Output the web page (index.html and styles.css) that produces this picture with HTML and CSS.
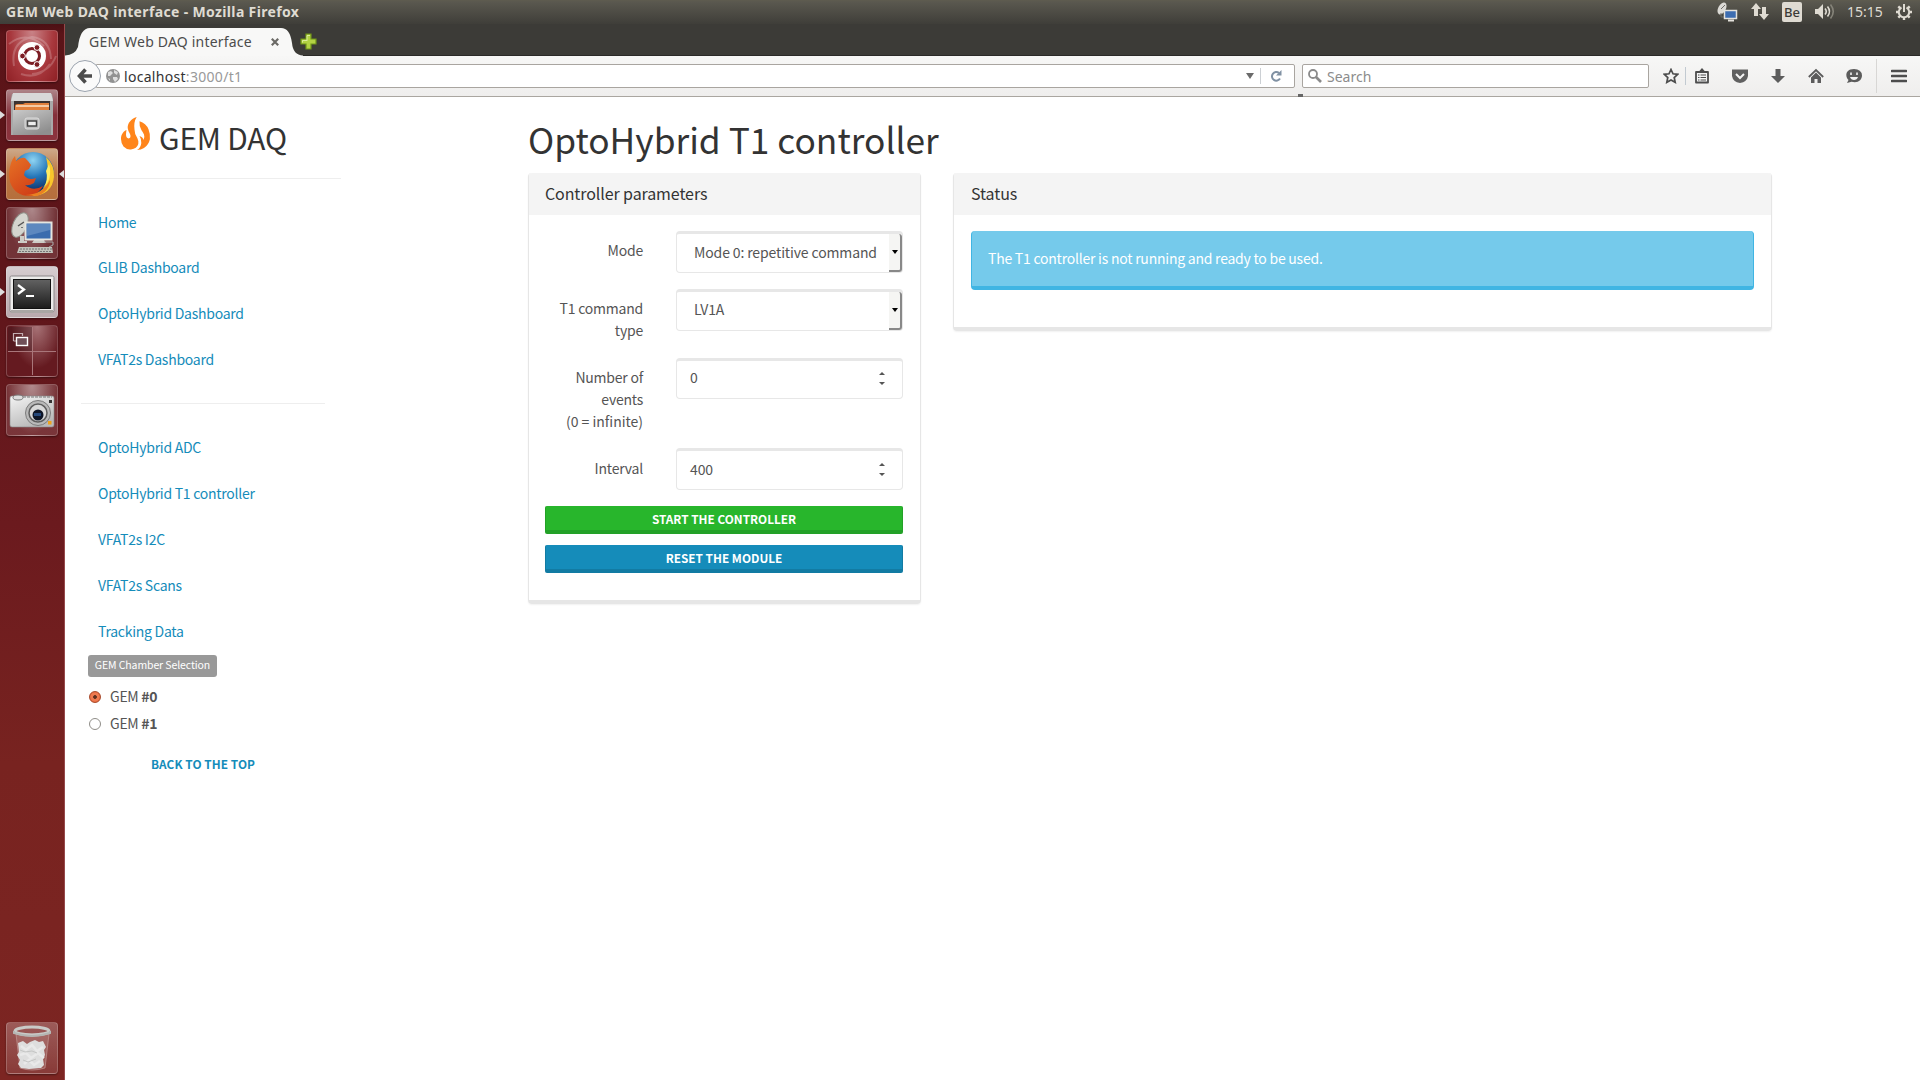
FILE: index.html
```html
<!DOCTYPE html>
<html lang="en">
<head>
<meta charset="utf-8">
<title>GEM Web DAQ interface</title>
<link rel="stylesheet" href="styles.css">
</head>
<body>
<header class="menubar">
  <span class="menubar-title">GEM Web DAQ interface - Mozilla Firefox</span>
  <div class="tray">
    <svg class="tray-net" width="22" height="20" viewBox="0 0 22 20"><ellipse cx="6" cy="6.500" rx="3.800" ry="6.500" transform="rotate(28 6 6.500)" fill="#dcdad5"/><path d="M5 7l4-4M5 11v4h4" stroke="#6d6c67" fill="none"/><rect x="8.500" y="8.500" width="12" height="8" fill="#3d6db1" stroke="#e4e2dd" stroke-width="1.500"/><path d="M12 18.500h6" stroke="#e4e2dd" stroke-width="2"/></svg>
    <svg class="tray-arrows" width="18" height="18" viewBox="0 0 18 18" fill="#dfdbd2"><path d="M5 0l5 6H7v7H3V6H0zM13 17l-5-6h3V4h4v7h3z"/></svg>
    <span class="tray-lang">Be</span>
    <svg class="tray-vol" width="20" height="18" viewBox="0 0 20 18"><path d="M0 6h3l5-5v15l-5-5H0z" fill="#dfdbd2"/><g fill="none" stroke-width="1.600"><path d="M10 5.500q2.500 3 0 6" stroke="#dfdbd2"/><path d="M12.500 3.500q4 5 0 10" stroke="#dfdbd2"/><path d="M15.500 1.500q5.500 7 0 14" stroke="#858379"/></g></svg>
    <span class="tray-time">15:15</span>
    <svg class="tray-gear" width="18" height="18" viewBox="0 0 18 18" fill="none" stroke="#dfdbd2"><path d="M6.500 4.500a5.200 5.200 0 1 0 5 0" stroke-width="2"/><path d="M9 1v8" stroke-width="2"/><path d="M1 9h2.500M14.500 9H17M3.300 3.300l2 2M14.700 3.300l-2 2M3.300 14.700l2-2M14.700 14.700l-2-2M9 14.500V17" stroke-width="2.400"/></svg>
  </div>
</header>
<div class="desktop">
  <nav class="launcher">
    <div class="tile tile-dash"><svg viewBox="0 0 52 52"><g fill="none" stroke="#fff" stroke-opacity=".2" stroke-width="2"><path d="M8 36Q4 12 26 7q18 2 19 22M3 14Q20 0 38 16M15 44q18 6 29-10M26 44q18-2 24-18"/></g><circle cx="26" cy="26" r="14" fill="#fff"/><circle cx="26" cy="26" r="7.500" fill="none" stroke="#7c1d24" stroke-width="3"/><g fill="#7c1d24" stroke="#fff" stroke-width="1"><circle cx="16.500" cy="26" r="2.900"/><circle cx="31" cy="17.500" r="2.900"/><circle cx="31" cy="34.500" r="2.900"/></g></svg></div>
    <div class="tile tile-files running"><svg viewBox="0 0 52 52"><defs><linearGradient id="fg" x2=".6" y2="1"><stop stop-color="#c9c9c9"/><stop offset="1" stop-color="#8f8f8f"/></linearGradient></defs><path d="M6 5h40l1 5v36H5V10z" fill="#a9a9a9"/><path d="M7 4h38l2 8H5z" fill="#d8d8d8"/><path d="M8 12h36v10H8z" fill="#3b3230"/><path d="M9 17q0-2 3-2l5 0 2-1h24v8H9z" fill="#e2803c"/><path d="M10 17h33" stroke="#fbe3c8" stroke-width="1.500"/><path d="M7 21h38v25H7z" fill="url(#fg)"/><rect x="19" y="29" width="14" height="11" rx="2" fill="#bdbdbd" stroke="#ddd"/><rect x="21.500" y="32" width="9" height="5" fill="#ededed" stroke="#444" stroke-width="1.500"/></svg></div>
    <div class="tile tile-firefox running active"><svg viewBox="0 0 52 52"><defs><radialGradient id="gl" cx=".5" cy=".2" r=".8"><stop stop-color="#8fd4f2"/><stop offset=".5" stop-color="#2375b8"/><stop offset="1" stop-color="#0e2458"/></radialGradient><linearGradient id="fx" x2=".7" y2="1"><stop stop-color="#e77325"/><stop offset="1" stop-color="#cf3c17"/></linearGradient></defs><circle cx="27" cy="25" r="21" fill="url(#gl)"/><path d="M40 9q9 8 8 20-2 18-22 19 15-5 15-19 2-8-1-20z" fill="#f9c62b"/><path d="M43 16q4 15-6 24 6-8 3-17z" fill="#fdec62"/><path d="M5 15q1-4 4-7l1 5q5-4 9-3l3 3 3 4-2 4-4 2-1 4q4 6 12 3l-2 5q-5 3-9 2 8 7 18 1-4 7-11 10Q9 49 4 34q-2-10 1-19z" fill="url(#fx)"/><path d="M19 47q17 0 25-15 0 11-13 16z" fill="#e98021"/></svg></div>
    <div class="tile"><svg viewBox="0 0 52 52"><ellipse cx="14" cy="18" rx="7" ry="13" transform="rotate(24 14 18)" fill="#d5d5cf" stroke="#8e9089"/><path d="M12 19l6-4M16 20v1" stroke="#555" stroke-width="1.500"/><path d="M14 29h4v5h3v2H12v-2h2zM28 33h10l2 3H26z" fill="#cdcdc7"/><rect x="19.500" y="15.500" width="26" height="17" fill="#3a6cae" stroke="#e5e5e0" stroke-width="2"/><path d="M21 17h23v6L21 29z" fill="#7fa3d0" opacity=".5"/><path d="M38 35h9v3l-4 2" fill="none" stroke="#aaa"/><path d="M13 40h33l1 6H11z" fill="#c2c3bb"/><path d="M14 42h32M13 44.500h33" stroke="#777" stroke-dasharray="2 1"/></svg></div>
    <div class="tile tile-term running"><svg viewBox="0 0 52 52"><defs><linearGradient id="tg" y2="1" x2="0"><stop stop-color="#626262"/><stop offset="1" stop-color="#1c1c1c"/></linearGradient></defs><rect x="4" y="10" width="44" height="36" rx="1.500" fill="#ecebea" stroke="#8b8789"/><rect x="5" y="44" width="42" height="3" fill="#a9a6a4"/><rect x="7.500" y="13.500" width="37" height="29" fill="url(#tg)" stroke="#111"/><path d="M12 19l6 4.500-6 4.500" fill="none" stroke="#fff" stroke-width="2.300"/><path d="M20 30h8" stroke="#fff" stroke-width="2"/></svg></div>
    <div class="tile tile-work"><svg viewBox="0 0 52 52"><path d="M26.500 2v48M2 26.500h48" stroke="#a9767a"/><path d="M2 2h24v24H2z" fill="#3a1a20" opacity=".35"/><path d="M7.500 16V8.500h9V11M7.500 16H10" fill="none" stroke="#c3aeb1" stroke-width="1.200"/><rect x="10.500" y="12.500" width="11" height="8" fill="#705058" stroke="#fff" stroke-width="1.400"/></svg></div>
    <div class="tile"><svg viewBox="0 0 52 52"><defs><linearGradient id="cg" x2=".5" y2="1"><stop stop-color="#f4f4f4"/><stop offset="1" stop-color="#b9b9b9"/></linearGradient></defs><rect x="4" y="12" width="44" height="31" rx="2" fill="url(#cg)" stroke="#888" stroke-width=".6"/><ellipse cx="12" cy="13.500" rx="5" ry="2.500" fill="#ddd" stroke="#777"/><path d="M17 13h29" stroke="#777" stroke-dasharray="3 1"/><circle cx="32" cy="29" r="12.500" fill="#b9b9b9" stroke="#7c7c7c"/><circle cx="32" cy="29" r="9" fill="#d9d9d9" stroke="#5e5e5e" stroke-width="1.500"/><circle cx="32" cy="31" r="5.500" fill="#0d1526"/><rect x="28" y="29" width="7" height="3" fill="#24477a"/><rect x="43" y="16" width="3" height="3" fill="#333"/><rect x="42" y="37" width="3.500" height="3.500" fill="#f0a31a"/></svg></div>
    <div class="tile tile-trash"><svg viewBox="0 0 52 52"><path d="M10 12h33l-4 34q-13 4-25 0z" fill="#d7b5b3" fill-opacity=".22" stroke="#c8a19f" stroke-opacity=".6"/><path d="M12 21l5-2 4 3 3-2 5-2 4 2 4-1 3 6-2 3 1 5-2 4 1 6-3 3-12 1-8-1-3-4 2-4-3-5 2-3z" fill="#dedede"/><path d="M15 24l5 4 6-5 5 6 6-4M14 33l6-2 5 5 7-5 6 5M18 42l5-4 5 5 6-4" fill="none" stroke="#e9e9e9" stroke-width="2.500"/><path d="M14 28l5 2 7-1 5 2M17 38l5 2 8-3" fill="none" stroke="#c4c5c4"/><ellipse cx="26" cy="9" rx="17" ry="4" fill="none" stroke="#c9cac7" stroke-width="3"/><path d="M8 9v2q18 6 36 0V9" fill="none" stroke="#b5b6b3" stroke-width="2"/></svg></div>
  </nav>
  <main class="browser">
    <div class="tabstrip">
      <div class="tab">
        <svg class="tab-shape" width="240" height="33" viewBox="0 0 240 33"><path d="M0 33V31.500Q10 31 13 23Q15 4 25 4H216Q225 4 227 19Q228 31 238 31.500V33z" fill="#f8f8f7"/></svg>
        <span class="tab-title">GEM Web DAQ interface</span>
        <svg class="tab-close" width="8" height="8" viewBox="0 0 8 8"><path d="M.8.8l6.400 6.400M7.200.8L.8 7.200" stroke="#6b6a66" stroke-width="2.200"/></svg>
      </div>
      <svg class="tab-new" width="17" height="17" viewBox="0 0 17 17"><path d="M6 1h5v5h5v5h-5v5H6v-5H1V6h5z" fill="#b3d243" stroke="#6f9418" stroke-width="1.200"/><path d="M7 8V2.500h3M2.500 9.500V7.500H7" fill="none" stroke="#dcec9c"/></svg>
    </div>
    <div class="toolbar">
      <div class="back"><svg width="16" height="16" viewBox="0 0 16 16"><path d="M8.500 1.500L2.500 8l6 6.500M3 8h12" fill="none" stroke="#4c4c4c" stroke-width="3.600"/></svg></div>
      <div class="urlbar">
        <svg class="globe" width="14" height="14" viewBox="0 0 14 14"><circle cx="7" cy="7" r="7" fill="#929292"/><path d="M2 3l3-1 2 2-3 3H2zM8 1l4 2-1 3-3-2zM7 8l4 0 1 2-3 3-2-3zM2 9l2 1 0 2z" fill="#dedede"/></svg>
        <span class="url"><b>localhost</b>:3000/t1</span>
        <svg class="drop" width="8" height="6" viewBox="0 0 8 6"><path d="M0 0h8L4 6z" fill="#6b6b6b"/></svg>
        <i class="url-sep"></i>
        <svg class="reload" width="12" height="12" viewBox="0 0 12 12"><path d="M9 3a4.300 4.300 0 1 0 1 5.500" fill="none" stroke="#8091a3" stroke-width="2"/><path d="M11.500 0v5.500H6z" fill="#8091a3"/></svg>
      </div>
      <div class="search"><svg width="14" height="14" viewBox="0 0 14 14" fill="none" stroke="#8a8a8a"><circle cx="5" cy="5" r="4" stroke-width="1.800"/><path d="M8 8l5 5" stroke-width="2.600"/></svg><span>Search</span></div>
      <div class="tools">
        <svg class="star" viewBox="0 0 16 16"><path d="M8 1.500l2 4.300 4.700.5-3.500 3.200 1 4.800L8 12l-4.200 2.300 1-4.800L1.300 6.300 6 5.800z" fill="none" stroke="#4d4d4d" stroke-width="1.700"/></svg>
        <i class="tool-sep"></i>
        <svg viewBox="0 0 16 16"><path d="M2 4h12v10.500H2z" fill="#f4f4f4" stroke="#4d4d4d" stroke-width="1.800" stroke-linejoin="round"/><path d="M4.500 4l3.500-4 3.500 4z" fill="#4d4d4d"/><path d="M4 7h1.500M6.500 7H12M4 9.500h1.500M6.500 9.500H12M4 12h1.500M6.500 12H12" stroke="#4d4d4d" stroke-width="1.100"/></svg>
        <svg viewBox="0 0 16 16"><path d="M0 1.500h16V8q-1 6-8 7Q1 14 0 8z" fill="#606060"/><path d="M4 6l4 4 4-4" fill="none" stroke="#f4f4f4" stroke-width="2"/></svg>
        <svg viewBox="0 0 16 16"><path d="M5.500 1h5v7H15l-7 7-7-7h4.500z" fill="#5c5c5c"/></svg>
        <svg viewBox="0 0 16 16"><path d="M.8 9L8 2l7.200 7" fill="none" stroke="#5c5c5c" stroke-width="1.800"/><path d="M3 9.500l5-5 5 5V15H9.500v-4h-3v4H3z" fill="#5c5c5c"/></svg>
        <svg viewBox="0 0 16 16"><path d="M8 1C-1 1-1 9 2.500 12L1 15l4.500-1.200C12 15.500 16 12 16 7.500Q15.500 1 8 1z" fill="#5c5c5c"/><path d="M5 4.500v2.500M11 4.500v2.500" stroke="#f2f2f2" stroke-width="1.600"/><path d="M4 9h8q-1 3-4 3t-4-3z" fill="#f2f2f2"/></svg>
        <i class="tool-sep tool-sep-tall"></i>
        <svg viewBox="0 0 16 16"><path d="M1 3h14M1 8h14M1 13h14" stroke="#4d4d4d" stroke-width="2.700" stroke-linecap="round"/></svg>
      </div>
      <i class="splitter"></i>
    </div>
    <div class="page">
      <aside class="sidebar">
        <div class="brand"><svg width="30" height="34" viewBox="0 0 30 34"><path d="M15.700 0C10 2 6.500 6 6.700 11q.3 3 2.300 6 1.500 4-1.500 4.500-2.500-.5-2.500-4 0-2 .5-4.500C1 15 0 19 0 22q0 4 2.500 7.500Q6 33 10 32.500q6-1 7.300-5.500.6-3-1-6-2.800-4-2.800-8.500Q12.500 5 15.700 0z" fill="#ff851b"/><path d="M18.500 4.200q6.500 2 9 8 2 5 1.400 10-1.400 6-5.900 8.800-3 2-7 2 4-2.500 4.300-7 .2-4-1.800-7 3.500 1 4 4 1.500-2.500.5-5.500-.8-2-2.500-4.300-2.500-4-2-9z" fill="#ff851b"/></svg><span>GEM DAQ</span></div>
        <ul class="nav nav-first"><li>Home</li><li>GLIB Dashboard</li><li>OptoHybrid Dashboard</li><li>VFAT2s Dashboard</li></ul>
        <ul class="nav nav-second"><li>OptoHybrid ADC</li><li>OptoHybrid T1 controller</li><li>VFAT2s I2C</li><li>VFAT2s Scans</li><li>Tracking Data</li></ul>
        <div class="chamber">
          <span class="badge">GEM Chamber Selection</span>
          <label class="radio"><i class="dot dot-on"></i><span>GEM <b>#0</b></span></label>
          <label class="radio"><i class="dot"></i><span>GEM <b>#1</b></span></label>
        </div>
        <a class="to-top">BACK TO THE TOP</a>
      </aside>
      <section class="content">
        <h1>OptoHybrid T1 controller</h1>
        <div class="cards">
          <div class="card card-params">
            <h3>Controller parameters</h3>
            <div class="card-body">
              <div class="row"><div class="lbl">Mode</div><div class="field select"><span>Mode 0: repetitive command</span><i class="select-btn"></i></div></div>
              <div class="row row-two"><div class="lbl">T1 command<br>type</div><div class="field select"><span class="short">LV1A</span><i class="select-btn"></i></div></div>
              <div class="row row-three"><div class="lbl">Number of<br>events<br><span class="hint">(0 = infinite)</span></div><div class="field field-low"><span>0</span><i class="spin"></i></div></div>
              <div class="row row-interval"><div class="lbl">Interval</div><div class="field"><span>400</span><i class="spin"></i></div></div>
              <div class="btn btn-start">START THE CONTROLLER</div>
              <div class="btn btn-reset">RESET THE MODULE</div>
            </div>
          </div>
          <div class="card card-status">
            <h3>Status</h3>
            <div class="card-body"><div class="alert">The T1 controller is not running and ready to be used.</div></div>
          </div>
        </div>
      </section>
    </div>
  </main>
</div>
</body>
</html>
```
FILE: styles.css
```css
* { box-sizing: border-box; }
body { margin: 0; width: 1920px; height: 1080px; overflow: hidden; background: #fff; font-family: "Noto Sans CJK SC", "Noto Sans", sans-serif; font-size: 14px; letter-spacing: -.26px; color: #555; }
svg { display: block; flex: none; }
i { display: block; flex: none; }
ul { list-style: none; margin: 0; padding: 0; }

/* top menu bar */
.menubar { height: 24px; background: linear-gradient(#5f5c4f 0, #5a584f 2px, #3f3e39 24px); display: flex; justify-content: space-between; padding: 0 7px 0 6px; font-family: "Noto Sans", sans-serif; letter-spacing: 0; color: #dfdbd2; }
.menubar-title { font-weight: 700; font-size: 14px; letter-spacing: .35px; line-height: 23px; white-space: nowrap; }
.tray { display: flex; align-items: center; }
.tray-net { margin-right: 13px; }
.tray-arrows { margin-right: 13px; }
.tray-lang { width: 20px; height: 20px; border-radius: 2px; background: #dfdbd2; color: #3c3b37; font-size: 13px; font-weight: 500; line-height: 20px; text-align: center; margin-right: 13px; }
.tray-vol { margin-right: 12px; }
.tray-time { width: 37px; font-size: 14px; line-height: 22px; margin-right: 11px; padding-bottom: 1px; }

/* launcher */
.desktop { display: grid; grid-template-columns: 65px 1fr; height: 1056px; }
.launcher { display: flex; flex-direction: column; gap: 7px; padding: 6px 7px 6px 6px; background: linear-gradient(#4c1014 0, #5b1418 10px, #5e151a 240px, #6b1a1e 500px, #782320 740px, #7c2522 100%); border-right: 1px solid #96494b; }
.tile { position: relative; width: 52px; height: 52px; border-radius: 4px; border: 1px solid rgba(255,255,255,.2); background: radial-gradient(ellipse at 50% 0, rgba(255,255,255,.5), rgba(255,255,255,.13) 70%); box-shadow: 0 1px 2px rgba(0,0,0,.4); }
.tile svg { width: 52px; height: 52px; margin: -1px; }
.tile-dash { background: radial-gradient(ellipse at 50% 0, #c98387, #a8383d 60%, #8f2025); }
.tile-files { background: linear-gradient(#ad8488, #85303a 50%, #8c343e); }
.tile-firefox { background: linear-gradient(#cda989, #bb7440 50%, #b56f3d); }
.tile-term { background: linear-gradient(#d6cdd0, #b9a9ad); }
.tile-work { background: radial-gradient(ellipse at 60% 0, #a87377, #651a20 60%); }
.tile-trash { margin-top: auto; background: linear-gradient(rgba(255,255,255,.25), rgba(255,255,255,.1)); }
.running::before, .active::after { content: ""; position: absolute; top: 21px; border: 4px solid transparent; }
.running::before { left: -7px; border-left: 5px solid #ddd; border-right: 0; }
.active::after { right: -7px; border-right: 5px solid #ddd; border-left: 0; }

/* browser chrome */
.browser { min-width: 0; font-family: "Noto Sans", sans-serif; letter-spacing: .2px; }
.tabstrip { height: 32px; background: #3c3b37; border-bottom: 1px solid #2b2a28; display: flex; align-items: center; }
.tab { position: relative; width: 240px; height: 32px; display: flex; align-items: center; padding: 4px 0 0 24px; }
.tab-shape { position: absolute; left: 0; top: 0; }
.tab-title { position: relative; width: 182px; font-size: 14px; line-height: 20px; color: #4c4c4c; white-space: nowrap; }
.tab-close { position: relative; }
.tab-new { margin: 4px 0 0 -5px; }
.toolbar { position: relative; height: 41px; background: linear-gradient(#f7f7f6, #efeeed); border-bottom: 1px solid #aaa6a0; display: flex; align-items: center; padding: 0 0 0 4px; }
.back { position: relative; width: 32px; height: 32px; border-radius: 50%; border: 1px solid #9ba3ae; background: #fafafa; display: flex; align-items: center; justify-content: center; z-index: 1; flex: none; }
.urlbar { flex: none; width: 1199px; height: 24px; margin-left: -5px; border: 1px solid #a9a5a0; border-radius: 0 2px 2px 0; background: #fff; display: flex; align-items: center; padding: 0 12px 0 9px; }
.url { flex: 1; margin-left: 4px; padding-top: 1px; font-size: 14px; letter-spacing: .3px; line-height: 20px; color: #999; }
.url b { font-weight: 400; color: #333; }
.url-sep { width: 1px; height: 16px; background: #ccd0d4; margin: 0 9px 0 6px; }
.search { flex: none; width: 347px; height: 24px; margin-left: 7px; border: 1px solid #a9a5a0; border-radius: 2px; background: #fff; display: flex; align-items: center; gap: 5px; padding-left: 5px; font-size: 14px; letter-spacing: 0; color: #8c8c8c; }
.tools { flex: 1; padding-right: 13px; display: flex; align-items: center; justify-content: flex-end; gap: 22px; }
.tools svg { width: 16px; height: 16px; }
.tools .star { margin-right: -1px; }
.tool-sep { width: 1px; height: 18px; background: #c2cad1; margin: 0 -14px 0 -15px; }
.tool-sep-tall { height: 34px; background: #d8d7d5; margin: 0 -8px; }
.splitter { position: absolute; left: 1233px; bottom: -1px; width: 5px; height: 3px; background: #666; }

/* page */
.page { height: 983px; display: flex; font-family: "Noto Sans CJK SC", "Noto Sans", sans-serif; letter-spacing: -.26px; }
.sidebar { width: 276px; flex: none; }
.brand { height: 82px; border-bottom: 1px solid #eee; display: flex; align-items: flex-start; padding: 20px 0 0 56px; gap: 8px; color: #333; font-size: 29.800px; letter-spacing: -.15px; line-height: 41px; }
.nav { margin: 0 16px; padding: 20px 17px 20px; color: #158cba; }
.nav li { height: 46px; line-height: 46px; white-space: nowrap; }
.nav-first { height: 225px; border-bottom: 1px solid #eee; }
.nav-first li:first-child { height: 45px; }
.nav-second { padding-bottom: 1px; }
.chamber { padding-left: 23px; }
.badge { display: block; width: 129px; height: 22px; border-radius: 3px; background: #999; color: #fff; font-size: 10.500px; letter-spacing: -.1px; line-height: 20px; text-align: center; margin-bottom: 6px; white-space: nowrap; }
.radio { display: flex; align-items: center; gap: 9px; height: 27px; padding-left: 1px; }
.radio span { padding-bottom: 2px; }
.dot { width: 12px; height: 12px; border-radius: 50%; border: 1px solid #8f8d88; background: #fff; }
.dot-on { border-color: #a9492a; background: radial-gradient(circle, #5d3020 0 1.500px, #ee7a50 2.200px 4px, #e8683c 5px); }
.to-top { display: block; margin-top: 16px; text-align: center; font-size: 11.800px; letter-spacing: .07px; font-weight: 700; color: #158cba; line-height: 22px; }
.content { padding: 22px 0 0 187px; }
h1 { margin: 0; font-weight: 400; font-size: 35.300px; letter-spacing: 0; line-height: 40px; color: #333; height: 54px; white-space: nowrap; }
.cards { display: flex; gap: 32px; align-items: flex-start; }
.card { border: 1px solid #e6e6e6; border-top: 0; border-bottom: 4px solid #e6e6e6; border-radius: 4px; box-shadow: 0 1px 2px rgba(0,0,0,.06); }
.card-params { width: 393px; height: 431px; }
.card-status { width: 819px; height: 158px; }
h3 { margin: 0; height: 42px; border-radius: 3px 3px 0 0; background: #f4f4f4; padding-left: 16px; font-weight: 400; font-size: 16px; letter-spacing: -.1px; line-height: 40px; color: #333; }
.card-body { padding: 16px 17px 0 16px; }
.card-status h3, .card-status .card-body { padding-left: 17px; }
.row { display: grid; grid-template-columns: 98px 227px; justify-content: space-between; height: 58px; }
.row-two { height: 69px; }
.row-three { height: 90px; }
.lbl { text-align: right; line-height: 22px; padding-top: 8px; letter-spacing: -.22px; white-space: nowrap; }
.row-interval .lbl { padding-top: 9px; }
.hint { letter-spacing: -.02px; }
.field { height: 42px; border: 1px solid #e7e7e7; border-top-width: 3px; border-radius: 4px; display: flex; align-items: center; justify-content: space-between; padding: 0 17px 0 13px; letter-spacing: -.13px; }
.field span { padding-bottom: 3px; }
.field .short, .field-low span { padding-bottom: 5px; }
.field-low { height: 41px; }
.select { padding: 0 0 0 17px; }
.select-btn { align-self: stretch; width: 13px; background: #f5f5f3; border-right: 2px solid #888; border-bottom: 2px solid #888; border-radius: 0 3px 3px 0; display: flex; align-items: center; justify-content: center; }
.select-btn::before { content: ""; margin-left: 1px; border: 3.500px solid transparent; border-top: 4px solid #000; border-bottom: 0; }
.spin { width: 6px; height: 13px; margin-top: -2px; display: flex; flex-direction: column; justify-content: space-between; }
.spin::before, .spin::after { content: ""; border: 3px solid transparent; }
.spin::before { border-bottom: 3px solid #555; border-top: 0; }
.spin::after { border-top: 3px solid #555; border-bottom: 0; }
.btn { height: 28px; border-radius: 2px; color: #fff; text-align: center; font-size: 11.800px; letter-spacing: 0; font-weight: 700; line-height: 26px; margin-bottom: 11px; }
.btn-start { background: #28b62c; border: 1px solid #23a127; border-top: 0; border-bottom-width: 4px; }
.btn-reset { background: #158cba; border: 1px solid #127ba3; border-top: 0; border-bottom-width: 4px; }
.alert { height: 59px; border: 1px solid #40b5e3; border-top: 0; border-bottom-width: 4px; border-radius: 4px; background: #75caeb; color: #fff; letter-spacing: -.23px; line-height: 55px; padding-left: 16px; }
```
